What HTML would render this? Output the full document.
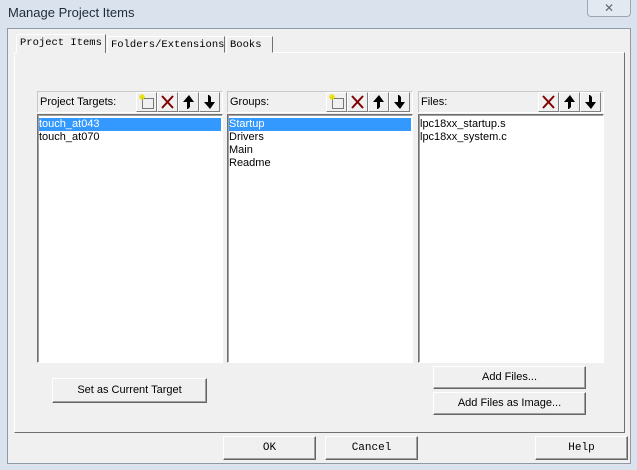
<!DOCTYPE html><html><head><style>
*{margin:0;padding:0;box-sizing:border-box}
body{width:637px;height:470px;overflow:hidden;background:#dae3ed;font-family:"Liberation Sans",sans-serif;font-size:11px;position:relative}
.a{position:absolute}
.dlg{left:7px;top:28px;width:624px;height:436px;background:#f0f0f0;border:1px solid #8d9aa8}
.title{left:8px;top:5px;font-size:13px;color:#1e2a3a}
.close{left:587px;top:0;width:44px;height:17px;border:1px solid #9aa6b4;border-top:none;border-radius:0 0 4px 4px;background:#e3e9f0;color:#666;text-align:center;font-size:12px;line-height:16px}
.panel{left:14px;top:52px;width:611px;height:381px;border:1px solid;border-color:#fff #707070 #707070 #fff}
.tab{top:36px;height:17px;border:1px solid;border-color:#fff #707070 transparent #fff;background:#f0f0f0;font-family:"Liberation Mono",monospace;font-size:10.5px;padding:2px 3px 0;white-space:nowrap}
.hdr{height:22px;border:1px solid;border-color:#c8c8c8 #fff #fff #c8c8c8;top:91px;padding:4px 0 0 2px;font-size:11px}
.list{top:114px;height:249px;background:#fff;border:1px solid;border-color:#707070 #fff #fff #707070;box-shadow:inset 1px 1px 0 #a0a0a0;padding:3px 1px;line-height:13px}
.sel{background:#3399ff;color:#fff}
.tb{top:92px;width:21px;height:20px;border:1px solid;border-color:#fff #808080 #808080 #fff;background:#f0f0f0}
.tb svg{display:block}
.btn{border:1px solid;border-color:#fff #646464 #646464 #fff;box-shadow:inset -1px -1px 0 #a0a0a0;background:#f0f0f0;text-align:center;font-size:11px}
.mono{font-family:"Liberation Mono",monospace;font-size:11px}
</style></head><body>
<div class="a title">Manage Project Items</div>
<div class="a close">✕</div>
<div class="a dlg"></div>
<div class="a panel"></div>
<div class="a tab" style="left:16px;top:34px;height:19px;border-bottom:none;z-index:2">Project Items</div>
<div class="a tab" style="left:107px;width:118px">Folders/Extensions</div>
<div class="a tab" style="left:226px;width:47px">Books</div>

<svg width="0" height="0" style="position:absolute"><defs>
<g id="new"><rect x="5.5" y="5.5" width="11" height="10" fill="none" stroke="#000" stroke-dasharray="1 1"/><path d="M3 2l4 4M7 2L3 6M5 1v6M2 4h6" stroke="#e8e000" stroke-width="1.2"/></g>
<g id="del"><path d="M4 3l11 12M15 3L4 15" stroke="#800000" stroke-width="2"/></g>
<g id="up"><path d="M10 2L4 9h4v7h1l2-2V9h4z" fill="#000"/></g>
<g id="dn"><path d="M10 16L4 9h4V2h1l2 2v5h4z" fill="#000"/></g>
</defs></svg>

<div class="a hdr" style="left:37px;width:186px">Project Targets:</div>
<div class="a tb" style="left:136px"><svg width="19" height="18"><use href="#new"/></svg></div>
<div class="a tb" style="left:157px"><svg width="19" height="18"><use href="#del"/></svg></div>
<div class="a tb" style="left:178px"><svg width="19" height="18"><use href="#up"/></svg></div>
<div class="a tb" style="left:199px"><svg width="19" height="18"><use href="#dn"/></svg></div>
<div class="a list" style="left:37px;width:186px"><div class="sel">touch_at043</div><div>touch_at070</div></div>

<div class="a hdr" style="left:227px;width:186px">Groups:</div>
<div class="a tb" style="left:326px"><svg width="19" height="18"><use href="#new"/></svg></div>
<div class="a tb" style="left:347px"><svg width="19" height="18"><use href="#del"/></svg></div>
<div class="a tb" style="left:368px"><svg width="19" height="18"><use href="#up"/></svg></div>
<div class="a tb" style="left:389px"><svg width="19" height="18"><use href="#dn"/></svg></div>
<div class="a list" style="left:227px;width:186px"><div class="sel">Startup</div><div>Drivers</div><div>Main</div><div>Readme</div></div>

<div class="a hdr" style="left:418px;width:186px">Files:</div>
<div class="a tb" style="left:538px"><svg width="19" height="18"><use href="#del"/></svg></div>
<div class="a tb" style="left:559px"><svg width="19" height="18"><use href="#up"/></svg></div>
<div class="a tb" style="left:580px"><svg width="19" height="18"><use href="#dn"/></svg></div>
<div class="a list" style="left:418px;width:186px"><div>lpc18xx_startup.s</div><div>lpc18xx_system.c</div></div>

<div class="a btn" style="left:52px;top:378px;width:155px;height:25px;line-height:23px">Set as Current Target</div>
<div class="a btn" style="left:433px;top:366px;width:153px;height:23px;line-height:21px">Add Files...</div>
<div class="a btn" style="left:433px;top:392px;width:153px;height:23px;line-height:21px">Add Files as Image...</div>
<div class="a btn mono" style="left:223px;top:436px;width:93px;height:24px;line-height:22px">OK</div>
<div class="a btn mono" style="left:325px;top:436px;width:93px;height:24px;line-height:22px">Cancel</div>
<div class="a btn mono" style="left:535px;top:436px;width:93px;height:24px;line-height:22px">Help</div>
</body></html>
